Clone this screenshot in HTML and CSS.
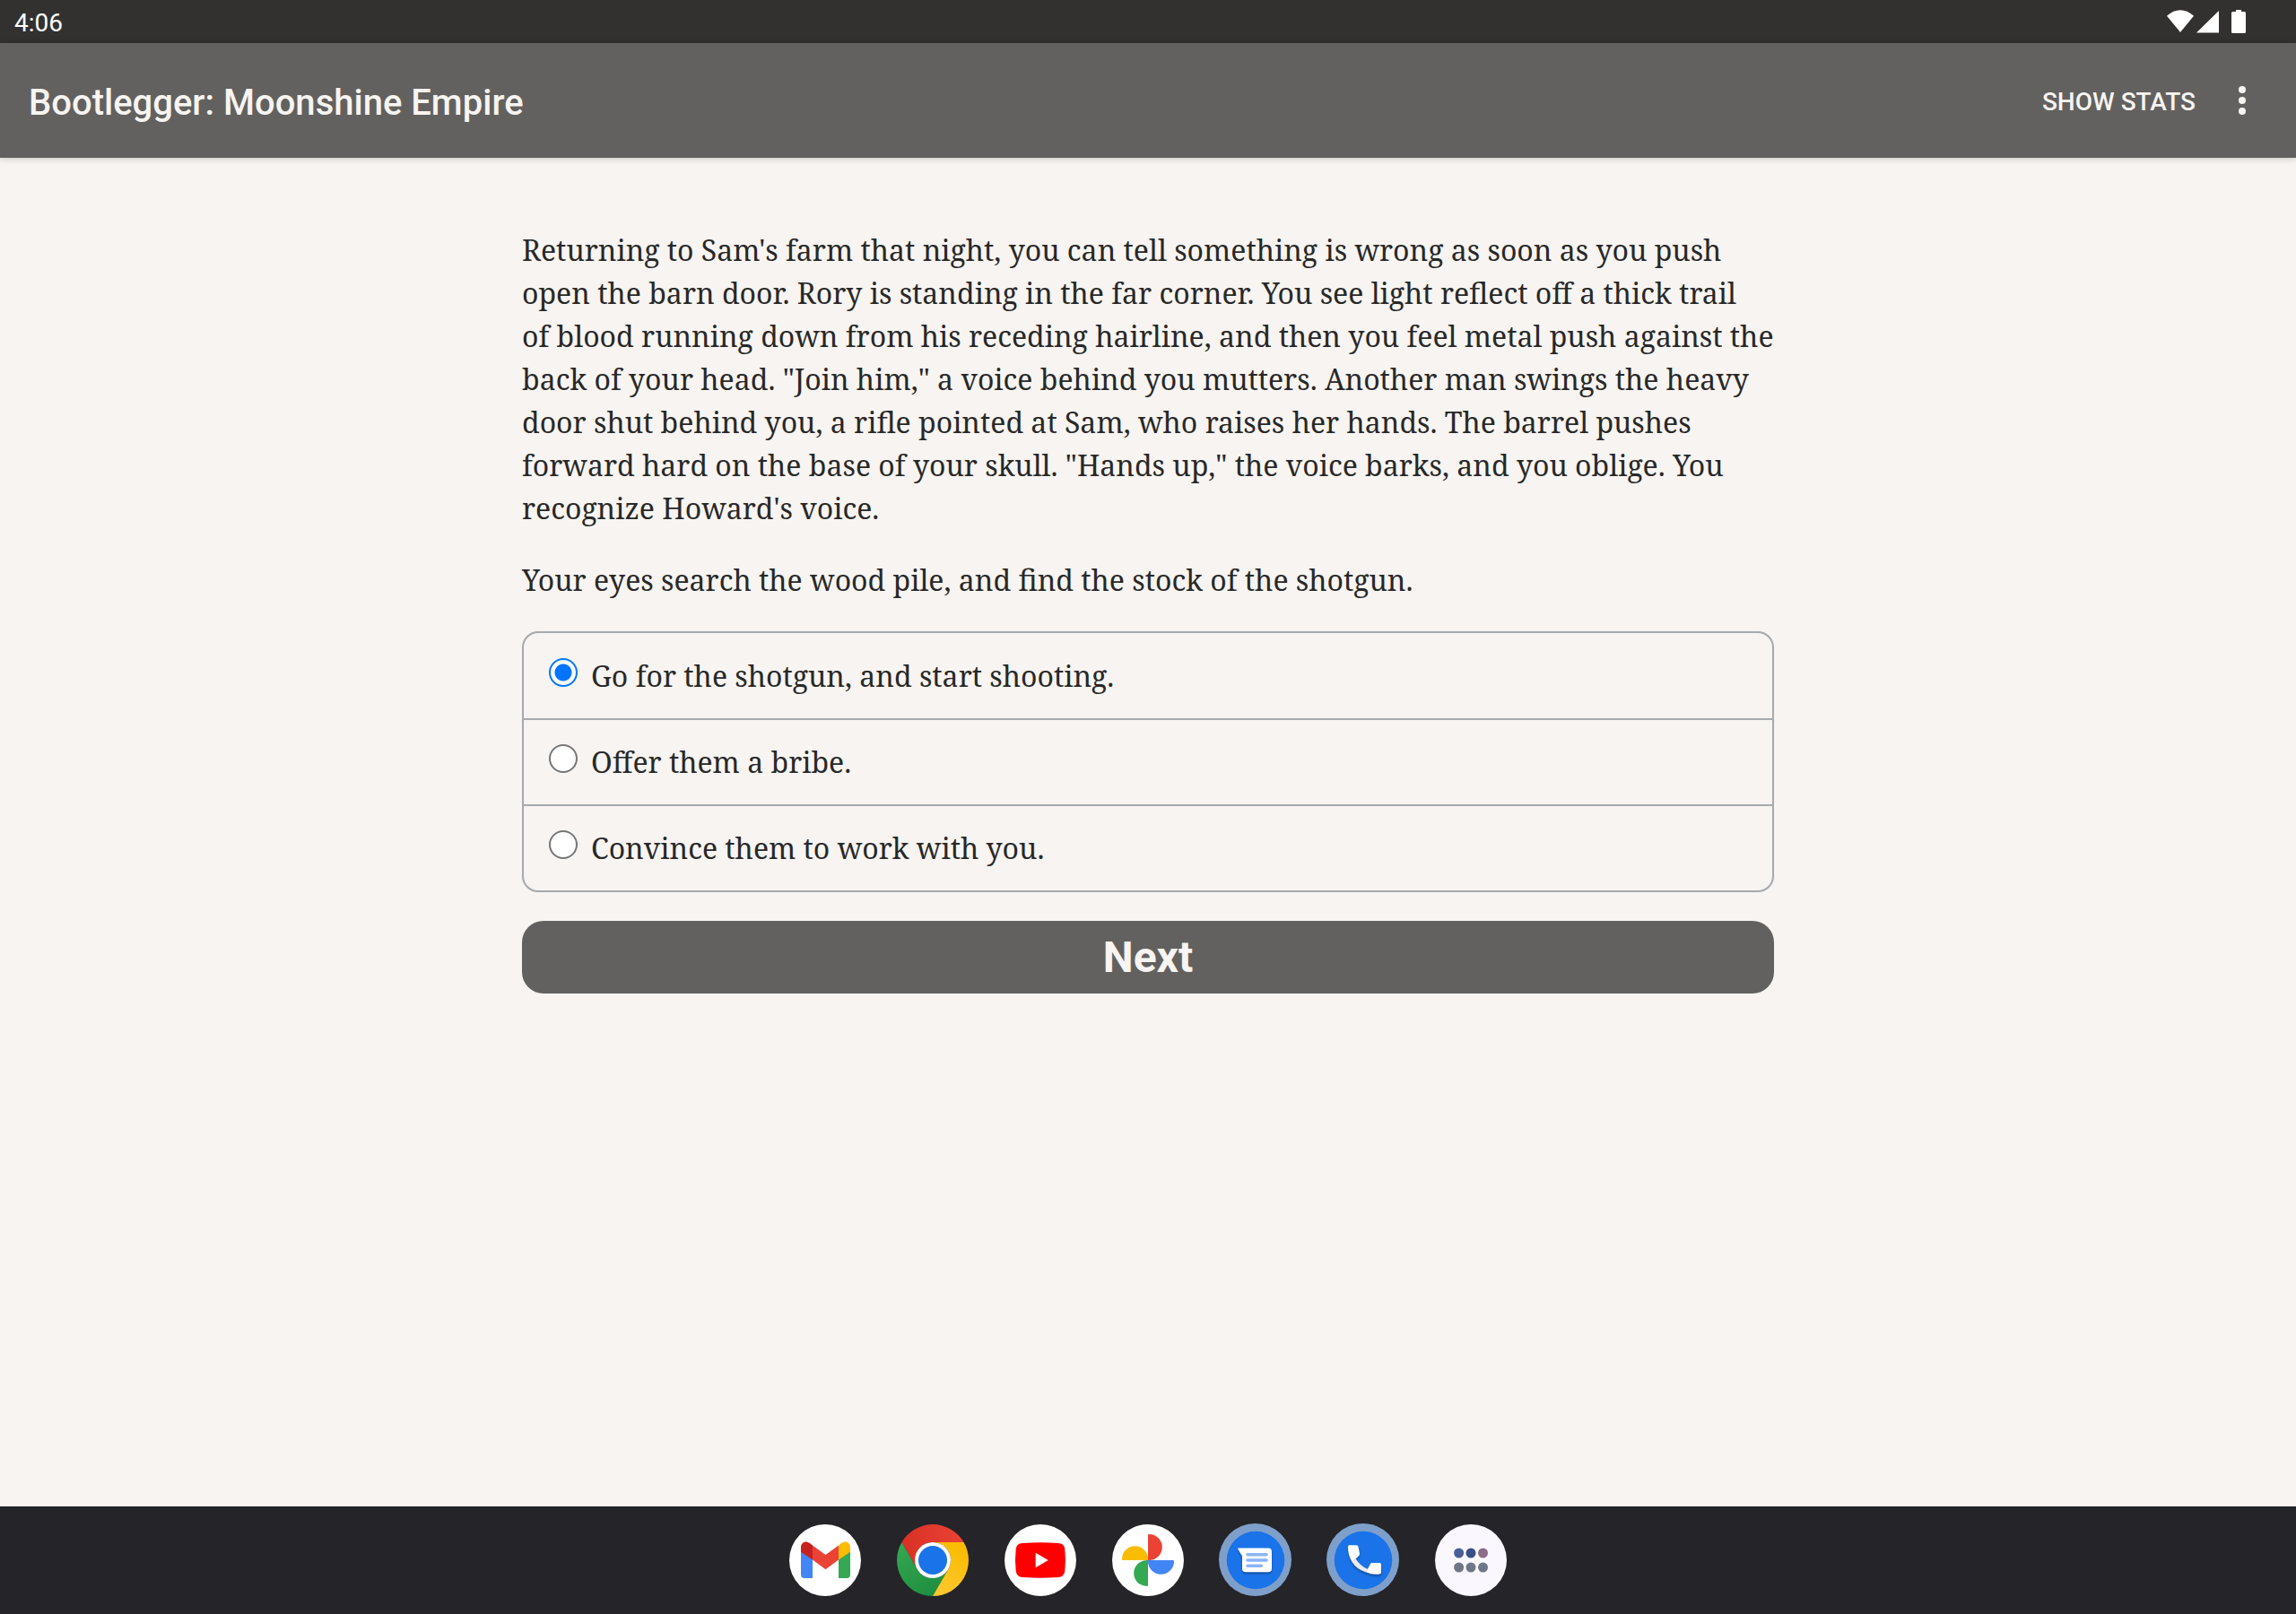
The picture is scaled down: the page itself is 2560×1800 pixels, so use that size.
FILE: index.html
```
<!DOCTYPE html>
<html lang="en">
<head>
<meta charset="UTF-8" />
<meta name="viewport" content="width=device-width, initial-scale=1" />
<title>Bootlegger: Moonshine Empire</title>
<link rel="stylesheet" href="styles.css">
</head>
<body>

<div class="status-bar">
  <span class="clock">4:06</span>
  <svg class="status-icons" width="88" height="26" viewBox="0 0 88 26" fill="#fff">
    <path d="M0 6.700Q15-6.200 30 6.700L15 25z" />
    <path d="M33 25.500L58 1V25.500z" />
    <path d="M77 0h6v2h3.500Q88 2 88 3.500V24.500Q88 26 86.500 26H73.500Q72 26 72 24.500V3.500Q72 2 73.500 2H77z" />
  </svg>
</div>

<header class="app-bar">
  <h1>Bootlegger: Moonshine Empire</h1>
  <button class="stats" type="button">SHOW STATS</button>
  <button class="menu" type="button" aria-label="More options">
    <svg width="8" height="32" viewBox="0 0 8 32" fill="#f7f4f1">
      <circle cx="4" cy="4" r="4" />
      <circle cx="4" cy="16" r="4" />
      <circle cx="4" cy="28" r="4" />
    </svg>
  </button>
</header>

<main class="story">
  <p>Returning to Sam's farm that night, you can tell something is wrong as soon as you push<br />
  open the barn door. Rory is standing in the far corner. You see light reflect off a thick trail<br />
  of blood running down from his receding hairline, and then you feel metal push against the<br />
  back of your head. "Join him," a voice behind you mutters. Another man swings the heavy<br />
  door shut behind you, a rifle pointed at Sam, who raises her hands. The barrel pushes<br />
  forward hard on the base of your skull. "Hands up," the voice barks, and you oblige. You<br />
  recognize Howard's voice.</p>
  <p>Your eyes search the wood pile, and find the stock of the shotgun.</p>

  <form>
    <div class="choices">
      <label class="choice"><input type="radio" name="choice" value="0" checked /> Go for the shotgun, and start shooting.</label>
      <label class="choice"><input type="radio" name="choice" value="1" /> Offer them a bribe.</label>
      <label class="choice"><input type="radio" name="choice" value="2" /> Convince them to work with you.</label>
    </div>
    <button class="next" type="button">Next</button>
  </form>
</main>

<nav class="dock">
  <button type="button" aria-label="Gmail">
    <svg viewBox="0 0 80 80">
      <circle cx="40" cy="40" r="40" fill="#fff" />
      <path d="M13 30L26 39V60H17Q13 60 13 56z" fill="#4285f4" />
      <path d="M68 30L55 39V60H64Q68 60 68 56z" fill="#34a853" />
      <path d="M26 23.500L40.500 34 55 23.500V39.500L40.500 50.300 26 39.500z" fill="#ea4335" />
      <path d="M13 30.700V25.500C13 20 18.500 17.500 23 21L26 23.500V39.500z" fill="#c5221f" />
      <path d="M68 30.700V25.500C68 20 62.500 17.500 58 21L55 23.500V39.500z" fill="#fbbc04" />
    </svg>
  </button>
  <button type="button" aria-label="Chrome">
    <svg viewBox="0 0 80 80">
      <defs>
        <linearGradient id="red" x1="0" x2="1"><stop stop-color="#d93025" /><stop offset="1" stop-color="#ea4335" /></linearGradient>
        <linearGradient id="green" x1="0.7" y1="1" x2="0.1" y2="0"><stop stop-color="#1e8e3e" /><stop offset="1" stop-color="#34a853" /></linearGradient>
        <linearGradient id="yellow" x1="0" y1="1" x2="0.4" y2="0"><stop stop-color="#fcc934" /><stop offset="1" stop-color="#fbbc04" /></linearGradient>
      </defs>
      <path d="M5.400 20A40 40 0 0 1 74.600 20H40A20 20 0 0 0 22.700 50z" fill="url(#red)" />
      <path d="M5.400 20L22.700 50A20 20 0 0 0 57.300 50L40 80A40 40 0 0 1 5.400 20z" fill="url(#green)" />
      <path d="M74.600 20A40 40 0 0 1 40 80L57.300 50A20 20 0 0 0 40 20z" fill="url(#yellow)" />
      <circle cx="40" cy="40" r="20" fill="#fff" />
      <circle cx="40" cy="40" r="16" fill="#1a73e8" />
    </svg>
  </button>
  <button type="button" aria-label="YouTube">
    <svg viewBox="0 0 80 80">
      <circle cx="40" cy="40" r="40" fill="#fff" />
      <path d="M20 21Q40 19.500 60 21Q66.500 21.300 67.300 27.500Q68.700 40 67.300 52Q66.500 58.500 60 59Q40 60.500 20 59Q13.500 58.500 12.700 52Q11.300 40 12.700 27.500Q13.500 21.300 20 21z" fill="#f00" />
      <path d="M34.700 31.800V48.300L48.800 40z" fill="#fff" />
    </svg>
  </button>
  <button type="button" aria-label="Photos">
    <svg viewBox="0 0 80 80">
      <circle cx="40" cy="40" r="40" fill="#fff" />
      <path d="M40 12Q40 11 41.300 11A14.500 14.500 0 0 1 41.300 40H40z" fill="#ea4335" />
      <path d="M68 40Q69 40 69 41.300A14.500 14.500 0 0 1 40 41.300V40z" fill="#4285f4" />
      <path d="M40 68Q40 69 38.700 69A14.500 14.500 0 0 1 38.700 40H40z" fill="#34a853" />
      <path d="M12 40Q11 40 11 38.700A14.500 14.500 0 0 1 40 38.700V40z" fill="#fbbc04" />
    </svg>
  </button>
  <button type="button" aria-label="Messages">
    <svg viewBox="0 0 80 80">
      <circle cx="39.500" cy="39.500" r="40.500" fill="#7f9fcb" />
      <circle cx="40" cy="40" r="32.300" fill="#1a73e8" />
      <path class="lifted" d="M20.300 26.600H54Q58 26.600 58 30.500V49.500Q58 53.300 54 53.300H29Q25 53.300 25 49.500V35.500L20.500 28Q20 27 20.300 26.600z" fill="#fff" />
      <path d="M31 33.700H52M31 40H52M31 46.300H46.300" stroke="#8ab4f8" stroke-width="3.600" stroke-linecap="round" />
    </svg>
  </button>
  <button type="button" aria-label="Phone">
    <svg viewBox="0 0 80 80">
      <circle cx="39.500" cy="39.500" r="40.500" fill="#7f9fcb" />
      <circle cx="40" cy="40" r="32.300" fill="#1a73e8" />
      <g class="lifted">
        <path d="M27.500 42L31.700 38.500Q36.500 46.500 45 50L43 53.500Q32.500 50 27.500 42z" fill="#e8eaed" />
        <path d="M24.500 23.200H32.500Q34 23.200 34.400 24.700L36 32.500Q36.200 34 35 35.200L27.700 42.200Q22.500 34 23 24.700Q23 23.200 24.500 23.200z" fill="#fff" />
        <path d="M49.500 43H58.200Q60 43 60 45V53.500Q60 55.300 58 55.600Q50 56.700 43 53.200L48 44Q48.500 43 49.500 43z" fill="#fff" />
      </g>
    </svg>
  </button>
  <button type="button" aria-label="All apps">
    <svg viewBox="0 0 80 80">
      <circle cx="40" cy="40" r="40" fill="#faf8fe" />
      <circle cx="26.600" cy="32" r="5.500" fill="#4a5f97" />
      <circle cx="40" cy="32" r="5.500" fill="#3b5088" />
      <circle cx="53.500" cy="32" r="5.500" fill="#8d6b8b" />
      <g fill="#6f768a">
        <circle cx="26.600" cy="48" r="5.500" />
        <circle cx="40" cy="48" r="5.500" />
        <circle cx="53.500" cy="48" r="5.500" />
      </g>
    </svg>
  </button>
</nav>

</body>
</html>
```
FILE: styles.css
```
* {
  box-sizing: border-box;
}
body {
  margin: 0;
  min-height: 100vh;
  display: flex;
  flex-direction: column;
  background: #f7f4f1;
  color: #282828;
  font-family: Roboto, sans-serif;
}
button {
  border: none;
  padding: 0;
  background: none;
  color: #f7f4f1;
  font-family: Roboto, sans-serif;
  cursor: pointer;
}
svg {
  display: block;
}

/* top bars */
.status-bar {
  display: flex;
  justify-content: space-between;
  align-items: center;
  height: 48px;
  padding: 0 56px 0 16px;
  background: #32312f;
  color: #fff;
  font-size: 28px;
}
.clock {
  padding-top: 2px;
}
.app-bar {
  display: flex;
  align-items: center;
  height: 128px;
  padding: 0 56px 0 32px;
  background: #62615f;
  color: #f7f4f1;
  box-shadow: 0 1px 8px rgba(0,0,0,0.18);
}
.app-bar h1 {
  flex: 1;
  margin: 0;
  padding-top: 4px;
  font-size: 40px;
  font-weight: 500;
}
.stats {
  margin-right: 48px;
  padding-top: 2px;
  font-size: 28px;
  font-weight: 500;
}

/* story text */
.story {
  flex: 1;
  width: 100%;
  max-width: 1396px;
  margin: 0 auto;
  padding: 79px 0;
  font-family: "Noto Serif", "DejaVu Serif Condensed", "DejaVu Serif", serif;
  font-size: 32px;
  line-height: 48px;
}
.story p {
  margin: 0 0 32px;
}

/* choices */
.choices {
  margin-top: 33px;
  border: 2px solid #a7a9ac;
  border-radius: 18px;
}
.choice {
  display: flex;
  align-items: center;
  gap: 15px;
  padding: 24px 28px 23px;
}
.choice + .choice {
  padding: 23px 28px;
  border-top: 2px solid #a7a9ac;
}
.choice input {
  appearance: none;
  width: 32px;
  height: 32px;
  margin: 0 0 8px;
  border: 2px solid #767676;
  border-radius: 50%;
  background: #fff;
}
.choice input:checked {
  border-color: #0075ff;
  background: radial-gradient(circle, #0075ff 9px, #fff 10px);
}
.next {
  display: block;
  width: 100%;
  height: 81px;
  margin-top: 32px;
  border-radius: 24px;
  background: #62615f;
  font-size: 48px;
  font-weight: bold;
}

/* dock */
.dock {
  display: flex;
  justify-content: center;
  gap: 40px;
  padding: 20px 0;
  background: #242429;
}
.dock svg {
  width: 80px;
  height: 80px;
  overflow: visible;
}
.lifted {
  filter: drop-shadow(0 2px 1px rgba(0,0,0,0.3));
}
```
